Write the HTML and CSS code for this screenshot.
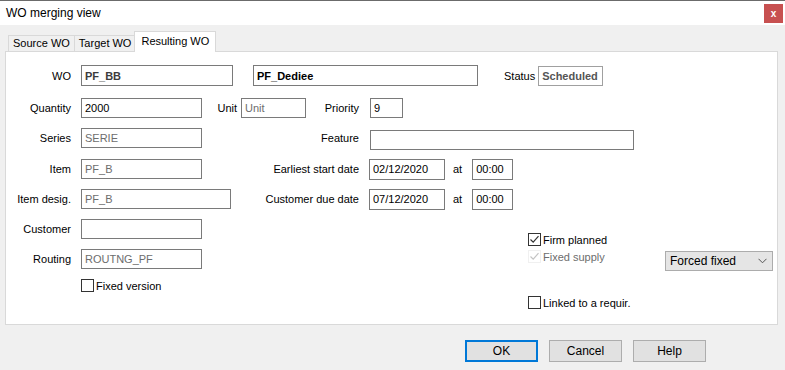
FILE: index.html
```html
<!DOCTYPE html>
<html lang="en">
<head>
  <meta charset="UTF-8">
  <title>WO merging view</title>
  <link rel="stylesheet" href="styles.css">
</head>
<body>
  <div class="dialog">
    <div class="titlebar">
      <span class="title">WO merging view</span>
      <span class="close">x</span>
    </div>

    <div class="tabs">
      <div class="tab">Source WO</div>
      <div class="tab">Target WO</div>
      <div class="tab active">Resulting WO</div>
    </div>

    <div class="panel">
      <div class="row row-first">
        <span class="lbl">WO</span>
        <input class="field bold dim w152" value="PF_BB" readonly>
        <input class="field bold w225 gap20" value="PF_Dediee" readonly>
        <span class="status-lbl">Status</span>
        <span class="status">Scheduled</span>
      </div>

      <div class="row">
        <span class="lbl">Quantity</span>
        <div class="mid">
          <input class="field w121" value="2000" readonly>
          <span class="unit-lbl">Unit</span>
          <input class="field grey w65 gap4" value="Unit" readonly>
          <span class="mid-lbl">Priority</span>
        </div>
        <input class="field w33 gap11" value="9" readonly>
      </div>

      <div class="row row-wide">
        <span class="lbl">Series</span>
        <div class="mid">
          <input class="field grey w121" value="SERIE" readonly>
          <span class="mid-lbl">Feature</span>
        </div>
        <input class="field w264 gap11 feature" value="" readonly>
      </div>

      <div class="row">
        <span class="lbl">Item</span>
        <div class="mid">
          <input class="field grey w121" value="PF_B" readonly>
          <span class="mid-lbl">Earliest start date</span>
        </div>
        <input class="field w76 gap10 date" value="02/12/2020" readonly>
        <span class="at">at</span>
        <input class="field w41 date" value="00:00" readonly>
      </div>

      <div class="row">
        <span class="lbl">Item desig.</span>
        <div class="mid">
          <input class="field grey w150" value="PF_B" readonly>
          <span class="mid-lbl">Customer due date</span>
        </div>
        <input class="field w76 gap10 date" value="07/12/2020" readonly>
        <span class="at">at</span>
        <input class="field w41 date" value="00:00" readonly>
      </div>

      <div class="lower">
        <div class="lower-left">
          <div class="row">
            <span class="lbl">Customer</span>
            <input class="field w121" value="" readonly>
          </div>
          <div class="row">
            <span class="lbl">Routing</span>
            <input class="field grey w121" value="ROUTNG_PF" readonly>
          </div>
          <div class="check-row indent">
            <svg class="box" width="13" height="13" viewBox="0 0 13 13">
              <rect x="0.5" y="0.5" width="12" height="12" fill="#fff" stroke="#333"/>
            </svg>
            <span>Fixed version</span>
          </div>
        </div>

        <div class="lower-right">
          <div class="check-row">
            <svg class="box" width="13" height="13" viewBox="0 0 13 13">
              <rect x="0.5" y="0.5" width="12" height="12" fill="#fff" stroke="#333"/>
              <path d="M2.5 6.5 L5.2 9.2 L10.5 3.2" fill="none" stroke="#333" stroke-width="1.2"/>
            </svg>
            <span>Firm planned</span>
          </div>
          <div class="supply-row">
            <div class="check-row disabled">
              <svg class="box" width="13" height="13" viewBox="0 0 13 13">
                <rect x="0.5" y="0.5" width="12" height="12" fill="#fff" stroke="#f0f0f0"/>
                <path d="M2.5 6.5 L5.2 9.2 L10.5 3.2" fill="none" stroke="#c4c4c4" stroke-width="1.2"/>
              </svg>
              <span>Fixed supply</span>
            </div>
            <div class="select">
              <span>Forced fixed</span>
              <svg width="9" height="6" viewBox="0 0 9 6">
                <path d="M0.5 0.8 L4.5 4.8 L8.5 0.8" fill="none" stroke="#555" stroke-width="1"/>
              </svg>
            </div>
          </div>
          <div class="check-row linked">
            <svg class="box" width="13" height="13" viewBox="0 0 13 13">
              <rect x="0.5" y="0.5" width="12" height="12" fill="#fff" stroke="#333"/>
            </svg>
            <span>Linked to a requir.</span>
          </div>
        </div>
      </div>
    </div>

    <div class="buttons">
      <button class="btn default">OK</button>
      <button class="btn">Cancel</button>
      <button class="btn">Help</button>
    </div>
  </div>
</body>
</html>
```

FILE: styles.css
```css
* {
  box-sizing: border-box;
}
body {
  margin: 0;
  background: #f0f0f0;
  font-family: "Liberation Sans", Arial, sans-serif;
  font-size: 11px;
  color: #000;
}
.dialog {
  width: 785px;
  height: 370px;
}
.titlebar {
  height: 25px;
  border-top: 1px solid #6b6b6b;
  background: #fff;
  display: flex;
  align-items: center;
  justify-content: space-between;
  padding-left: 6px;
}
.title {
  font-size: 12px;
}
.close {
  width: 19px;
  height: 19px;
  margin-right: 2px;
  background: #c75050;
  color: #fff;
  font-weight: bold;
  font-size: 10px;
  display: flex;
  align-items: center;
  justify-content: center;
}

/* tabs */
.tabs {
  display: flex;
  align-items: flex-end;
  height: 21px;
  margin: 6px 0 -1px 8px;
}
.tab {
  height: 16px;
  line-height: 15px;
  padding: 0 4px;
  margin-bottom: 1px;
  border: 1px solid #d9d9d9;
  border-bottom: none;
  background: #f0f0f0;
}
.tab + .tab {
  margin-left: -1px;
}
.tab.active {
  position: relative;
  z-index: 1;
  height: 21px;
  line-height: 18px;
  margin-bottom: 0;
  margin-left: -2px;
  padding: 0 6px;
  background: #fff;
}

/* panel */
.panel {
  margin-left: 5px;
  width: 773px;
  height: 274px;
  background: #fff;
  border: 1px solid #d9d9d9;
  padding-top: 13px;
}
.row {
  display: flex;
  align-items: center;
  height: 20px;
  margin-bottom: 10px;
}
.row-first {
  height: 21px;
  margin-bottom: 12px;
}
.row-wide {
  margin-bottom: 11px;
}
.lbl {
  flex: none;
  width: 65px;
  margin-right: 10px;
  text-align: right;
}
.mid {
  flex: none;
  width: 278px;
  height: 100%;
  display: flex;
  align-items: center;
}
.mid-lbl {
  margin-left: auto;
}
.unit-lbl {
  width: 35px;
  text-align: right;
}
.field {
  flex: none;
  height: 100%;
  border: 1px solid #7a7a7a;
  padding: 0 3px;
  font: inherit;
  color: #000;
  background: #fff;
  outline: none;
}
.field.bold { font-weight: bold; }
.field.dim { color: #3c3c3c; }
.field.grey { color: #6d6d6d; }
.field.date { height: 21px; }
.feature { margin-top: 4px; }

.w33 { width: 33px; }
.w41 { width: 41px; }
.w65 { width: 65px; }
.w76 { width: 76px; }
.w121 { width: 121px; }
.w150 { width: 150px; }
.w152 { width: 152px; }
.w225 { width: 225px; }
.w264 { width: 264px; }
.gap4 { margin-left: 4px; }
.gap10 { margin-left: 10px; }
.gap11 { margin-left: 11px; }
.gap20 { margin-left: 20px; }

.at {
  margin: 0 10px 0 8px;
}
.status-lbl {
  margin-left: 26px;
  margin-right: 3px;
}
.status {
  width: 65px;
  height: 20px;
  border: 1px solid #a0a0a0;
  padding-left: 3px;
  display: flex;
  align-items: center;
  font-weight: bold;
  color: #555;
}

/* lower part with check boxes */
.lower {
  display: flex;
}
.lower-left {
  flex: none;
  width: 522px;
}
.lower-right {
  flex: 1;
  padding-top: 14px;
  padding-right: 4px;
}
.check-row {
  display: flex;
  align-items: center;
  height: 13px;
  gap: 2px;
}
.check-row.indent {
  margin-left: 75px;
}
.check-row .box {
  flex: none;
}
.check-row.disabled {
  color: #6d6d6d;
}
.supply-row {
  display: flex;
  align-items: flex-start;
  margin-top: 4px;
}
.supply-row .check-row {
  margin-top: 0;
}
.select {
  margin-left: auto;
  margin-top: 1px;
  width: 108px;
  height: 20px;
  background: #e5e5e5;
  border: 1px solid #acacac;
  display: flex;
  align-items: center;
  justify-content: space-between;
  padding: 0 5px 0 4px;
  font-size: 12px;
}
.linked {
  margin-top: 25px;
}

/* dialog buttons */
.buttons {
  display: flex;
  justify-content: flex-end;
  gap: 11px;
  padding-right: 79px;
  margin-top: 15px;
}
.btn {
  width: 73px;
  height: 22px;
  background: #e1e1e1;
  border: 1px solid #adadad;
  font: inherit;
  font-size: 12px;
  color: #000;
  padding: 0;
}
.btn.default {
  border: 2px solid #0078d7;
}
```
